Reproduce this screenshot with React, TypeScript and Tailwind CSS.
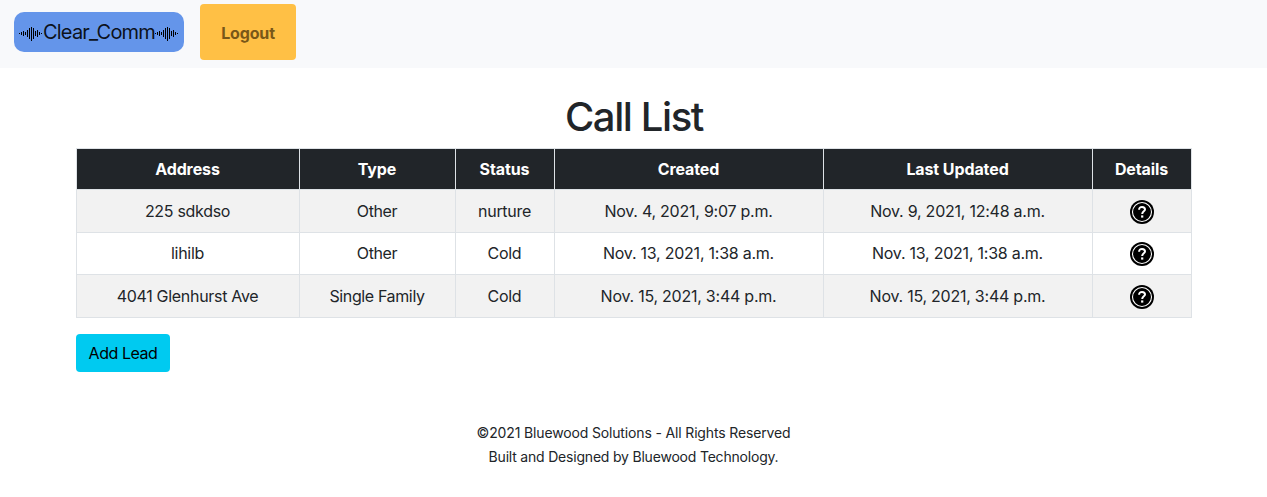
const columns = [
  { label: "Address", width: "w-[223px]" },
  { label: "Type", width: "w-[156px]" },
  { label: "Status", width: "w-[99px]" },
  { label: "Created", width: "w-[269px]" },
  { label: "Last Updated", width: "w-[269px]" },
  { label: "Details", width: "w-[99px]" },
];

const tracking = [
  "tracking-[-0.3px]",
  "tracking-[-0.37px]",
  "tracking-[-0.3px]",
  "tracking-[-0.24px]",
  "tracking-[-0.24px]",
];

const leads = [
  { height: "h-[43px]", pad: "pb-0", cells: ["225 sdkdso", "Other", "nurture", "Nov. 4, 2021, 9:07 p.m.", "Nov. 9, 2021, 12:48 a.m."] },
  { height: "h-[42px]", pad: "pb-px", cells: ["lihilb", "Other", "Cold", "Nov. 13, 2021, 1:38 a.m.", "Nov. 13, 2021, 1:38 a.m."] },
  { height: "h-[43px]", pad: "pb-0", cells: ["4041 Glenhurst Ave", "Single Family", "Cold", "Nov. 15, 2021, 3:44 p.m.", "Nov. 15, 2021, 3:44 p.m."] },
];

const waveBars = [1, 3, 5, 3, 7, 11, 14, 11, 5, 7, 3, 1];

function Wave() {
  return (
    <svg className="h-4 w-6 shrink-0" viewBox="0 0 24 16" shapeRendering="crispEdges" aria-hidden="true">
      {waveBars.map((h, i) => (
        <rect key={i} x={i * 2} y={Math.floor(8 - h / 2)} width="1" height={h} fill="#000" />
      ))}
    </svg>
  );
}

function QuestionIcon() {
  return (
    <svg className="mx-auto block size-6" viewBox="0 0 24 24" role="img" aria-label="Details">
      <circle cx="12" cy="12" r="12" fill="#000" />
      <circle cx="12" cy="12" r="9.5" fill="none" stroke="#fff" strokeWidth="1.1" />
      <path d="M9.1 9.7C9.1 7.9 10.3 6.9 12 6.9S15 7.9 15 9.5C15 11.3 12.2 11.5 12.2 14" fill="none" stroke="#fff" strokeWidth="2" />
      <rect x="11.1" y="15.4" width="2.2" height="2.2" fill="#fff" />
    </svg>
  );
}

export default function App() {
  return (
    <div className="min-h-[497px] bg-white font-['Inter',sans-serif] text-base text-[#212529]">
      <nav className="flex h-[68px] items-start gap-4 bg-[#f8f9fb] pt-1 pl-[14px]">
        <a className="mt-2 flex h-10 w-[170px] items-center rounded-[10px] bg-[#6495ea] pl-[5px] text-[20px] text-black/90">
          <span className="mt-1"><Wave /></span>
          <span className="w-[112px] text-center tracking-[-0.8px] whitespace-nowrap">Clear_Comm</span>
          <span className="mt-1"><Wave /></span>
        </a>
        <button className="h-14 w-24 rounded-[4px] bg-[#ffc045] pt-0.5 font-bold tracking-[-0.15px] text-[#795718]">Logout</button>
      </nav>
      <main className="pl-[76px]">
        <h1 className="h-20 w-[1116px] pt-[25px] text-center text-[40px] leading-[48px] font-[550] tracking-[-1.4px]">Call List</h1>
        <table className="w-[1116px] table-fixed border-separate border-spacing-0 border-t border-l border-[#dee2e6] text-center whitespace-nowrap">
          <thead>
            <tr className="h-[41px] bg-[#212529] text-white">
              {columns.map((c) => (
                <th key={c.label} className={`${c.width} border-r border-b border-[#dee2e6] p-0 pr-px font-bold tracking-[-0.1px]`}>{c.label}</th>
              ))}
            </tr>
          </thead>
          <tbody>
            {leads.map((lead, i) => (
              <tr key={i} className={`${lead.height} odd:bg-[#f2f2f2]`}>
                {lead.cells.map((text, j) => (
                  <td key={j} className={`${tracking[j]} ${lead.pad} border-r border-b border-[#dee2e6] px-0 pt-0 pr-px`}>{text}</td>
                ))}
                <td className="border-r border-b border-[#dee2e6] p-0 pt-px"><QuestionIcon /></td>
              </tr>
            ))}
          </tbody>
        </table>
        <button className="mt-4 block h-[38px] w-[94px] rounded-[4px] bg-[#00caf0] tracking-[-0.45px] text-black">Add Lead</button>
      </main>
      <footer className="pt-[49px] text-center text-sm leading-6">
        <p className="tracking-[-0.15px]">©2021 Bluewood Solutions - All Rights Reserved</p>
        <p className="tracking-[-0.2px]">Built and Designed by Bluewood Technology.</p>
      </footer>
    </div>
  );
}
